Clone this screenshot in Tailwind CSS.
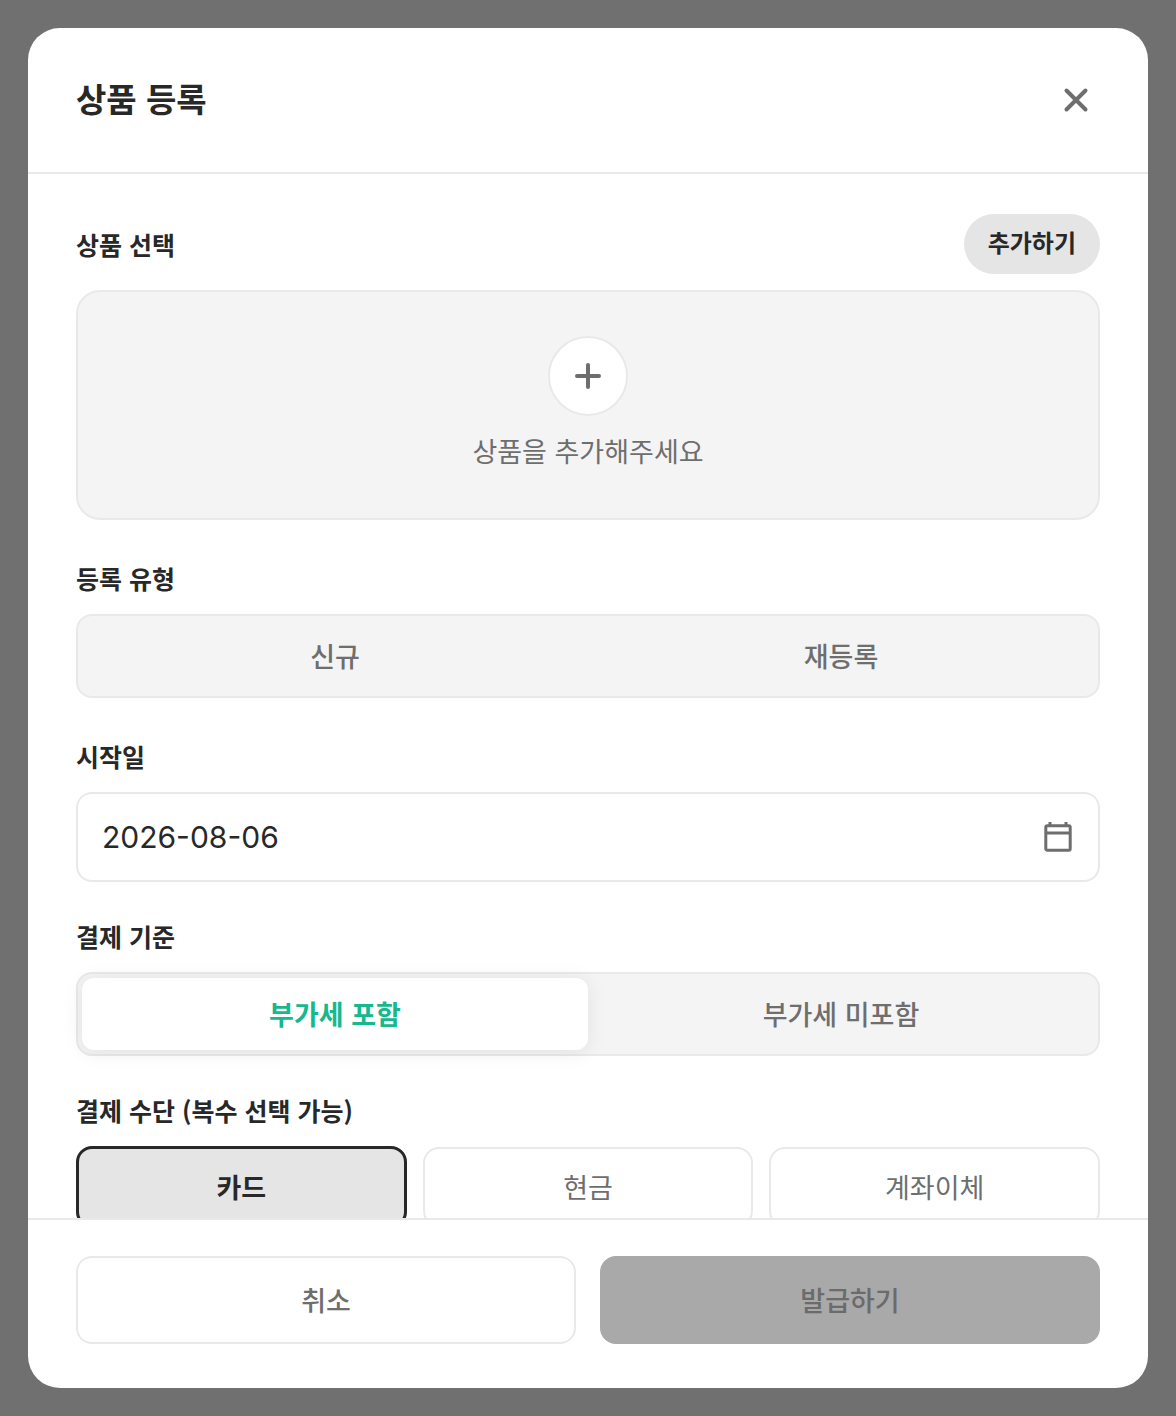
<!DOCTYPE html>
<html lang="ko">
<head>
<meta charset="utf-8">
<meta name="viewport" content="width=device-width, initial-scale=1">
<title>상품 등록</title>
<script src="https://cdn.jsdelivr.net/npm/@tailwindcss/browser@4"></script>
</head>
<body class="bg-[#707070] font-['Noto_Sans_CJK_KR','Noto_Sans',sans-serif] text-[#282828]">
<div class="flex h-screen p-7">
  <form role="dialog" aria-labelledby="title" class="flex min-w-0 flex-1 flex-col overflow-hidden rounded-[32px] bg-white">
    <header class="flex items-start justify-between border-b-2 border-[#e9e9e9] p-12">
      <h1 id="title" class="text-[33px] leading-11 font-bold">상품 등록</h1>
      <button type="button" aria-label="닫기" class="flex size-12 items-center justify-center text-[#6e6e6e]">
        <svg class="size-12" viewBox="0 0 48 48" fill="none" stroke="currentColor" stroke-width="4" stroke-linecap="round"><path d="M14.5 14.5l19 19M33.5 14.5l-19 19"/></svg>
      </button>
    </header>

    <main class="min-h-0 flex-1 overflow-y-auto px-12 py-10 [scrollbar-width:none]">
      <section>
        <div class="mb-4 flex items-center justify-between">
          <h2 class="text-[25px] leading-9 font-bold">상품 선택</h2>
          <button type="button" class="h-15 rounded-full bg-[#e5e5e5] px-6 pb-1 text-[24px] leading-9 font-bold">추가하기</button>
        </div>
        <div class="flex flex-col items-center gap-4 rounded-3xl border-2 border-[#e9e9e9] bg-[#f4f4f4] pt-11 pb-12">
          <button type="button" aria-label="상품 추가" class="flex size-20 items-center justify-center rounded-full border-2 border-[#e9e9e9] bg-white text-[#6e6e6e]">
            <svg class="size-10" viewBox="0 0 40 40" fill="none" stroke="currentColor" stroke-width="4" stroke-linecap="round"><path d="M20 9v22M9 20h22"/></svg>
          </button>
          <p class="text-[27px] leading-[38px] text-[#6e6e6e]">상품을 추가해주세요</p>
        </div>
      </section>

      <fieldset class="mt-10">
        <legend class="mb-[18px] text-[25px] leading-9 font-bold">등록 유형</legend>
        <div class="grid h-21 grid-cols-2 rounded-2xl border-2 border-[#e9e9e9] bg-[#f4f4f4] p-1 text-[27px] font-medium text-[#6e6e6e]">
          <label class="relative flex items-center justify-center rounded-xl"><input type="radio" name="kind" class="sr-only">신규</label>
          <label class="relative flex items-center justify-center rounded-xl"><input type="radio" name="kind" class="sr-only">재등록</label>
        </div>
      </fieldset>

      <section class="mt-10">
        <label for="start" class="mb-[18px] block text-[25px] leading-9 font-bold">시작일</label>
        <div class="flex h-[90px] items-center rounded-2xl border-2 border-[#e9e9e9] px-6">
          <input id="start" type="text" value="2026-08-06" class="min-w-0 flex-1 font-['Inter',sans-serif] text-[30px] leading-10 outline-none">
          <button type="button" aria-label="날짜 선택" class="text-[#6e6e6e]">
            <svg class="size-8" viewBox="0 0 32 32" fill="none" stroke="currentColor" stroke-width="3"><rect x="3.8" y="4.8" width="24.4" height="24.4" rx="1.5"/><path d="M4 12h24M8 1v4M24 1v4"/></svg>
          </button>
        </div>
      </section>

      <fieldset class="mt-9">
        <legend class="mb-[18px] text-[25px] leading-9 font-bold">결제 기준</legend>
        <div class="grid h-21 grid-cols-2 rounded-2xl border-2 border-[#e9e9e9] bg-[#f4f4f4] p-1 text-[27px] font-medium text-[#6e6e6e]">
          <label class="relative flex items-center justify-center rounded-xl bg-white font-bold text-[#16b88e] shadow-[0_2px_20px_rgba(0,0,0,0.08)]"><input type="radio" name="tax" class="sr-only" checked>부가세 포함</label>
          <label class="relative flex items-center justify-center rounded-xl"><input type="radio" name="tax" class="sr-only">부가세 미포함</label>
        </div>
      </fieldset>

      <fieldset class="mt-9">
        <legend class="mb-[18px] text-[25px] leading-9 font-bold">결제 수단 (복수 선택 가능)</legend>
        <div class="grid grid-cols-3 items-center gap-4 text-[27px] text-[#6e6e6e]">
          <label class="relative flex h-[82px] items-center justify-center rounded-2xl border-3 border-[#282828] bg-[#e5e5e5] font-bold text-[#282828]"><input type="checkbox" class="sr-only" checked>카드</label>
          <label class="relative flex h-20 items-center justify-center rounded-2xl border-2 border-[#e9e9e9]"><input type="checkbox" class="sr-only">현금</label>
          <label class="relative flex h-20 items-center justify-center rounded-2xl border-2 border-[#e9e9e9]"><input type="checkbox" class="sr-only">계좌이체</label>
        </div>
      </fieldset>
    </main>

    <footer class="grid grid-cols-2 gap-6 border-t-2 border-[#e9e9e9] px-12 pt-9 pb-11 text-[27px] font-medium">
      <button type="button" class="h-22 rounded-2xl border-2 border-[#e9e9e9] text-[#6e6e6e]">취소</button>
      <button type="submit" disabled class="h-22 rounded-2xl bg-[#a9a9a9] text-[#6b6b6b]">발급하기</button>
    </footer>
  </form>
</div>
</body>
</html>
